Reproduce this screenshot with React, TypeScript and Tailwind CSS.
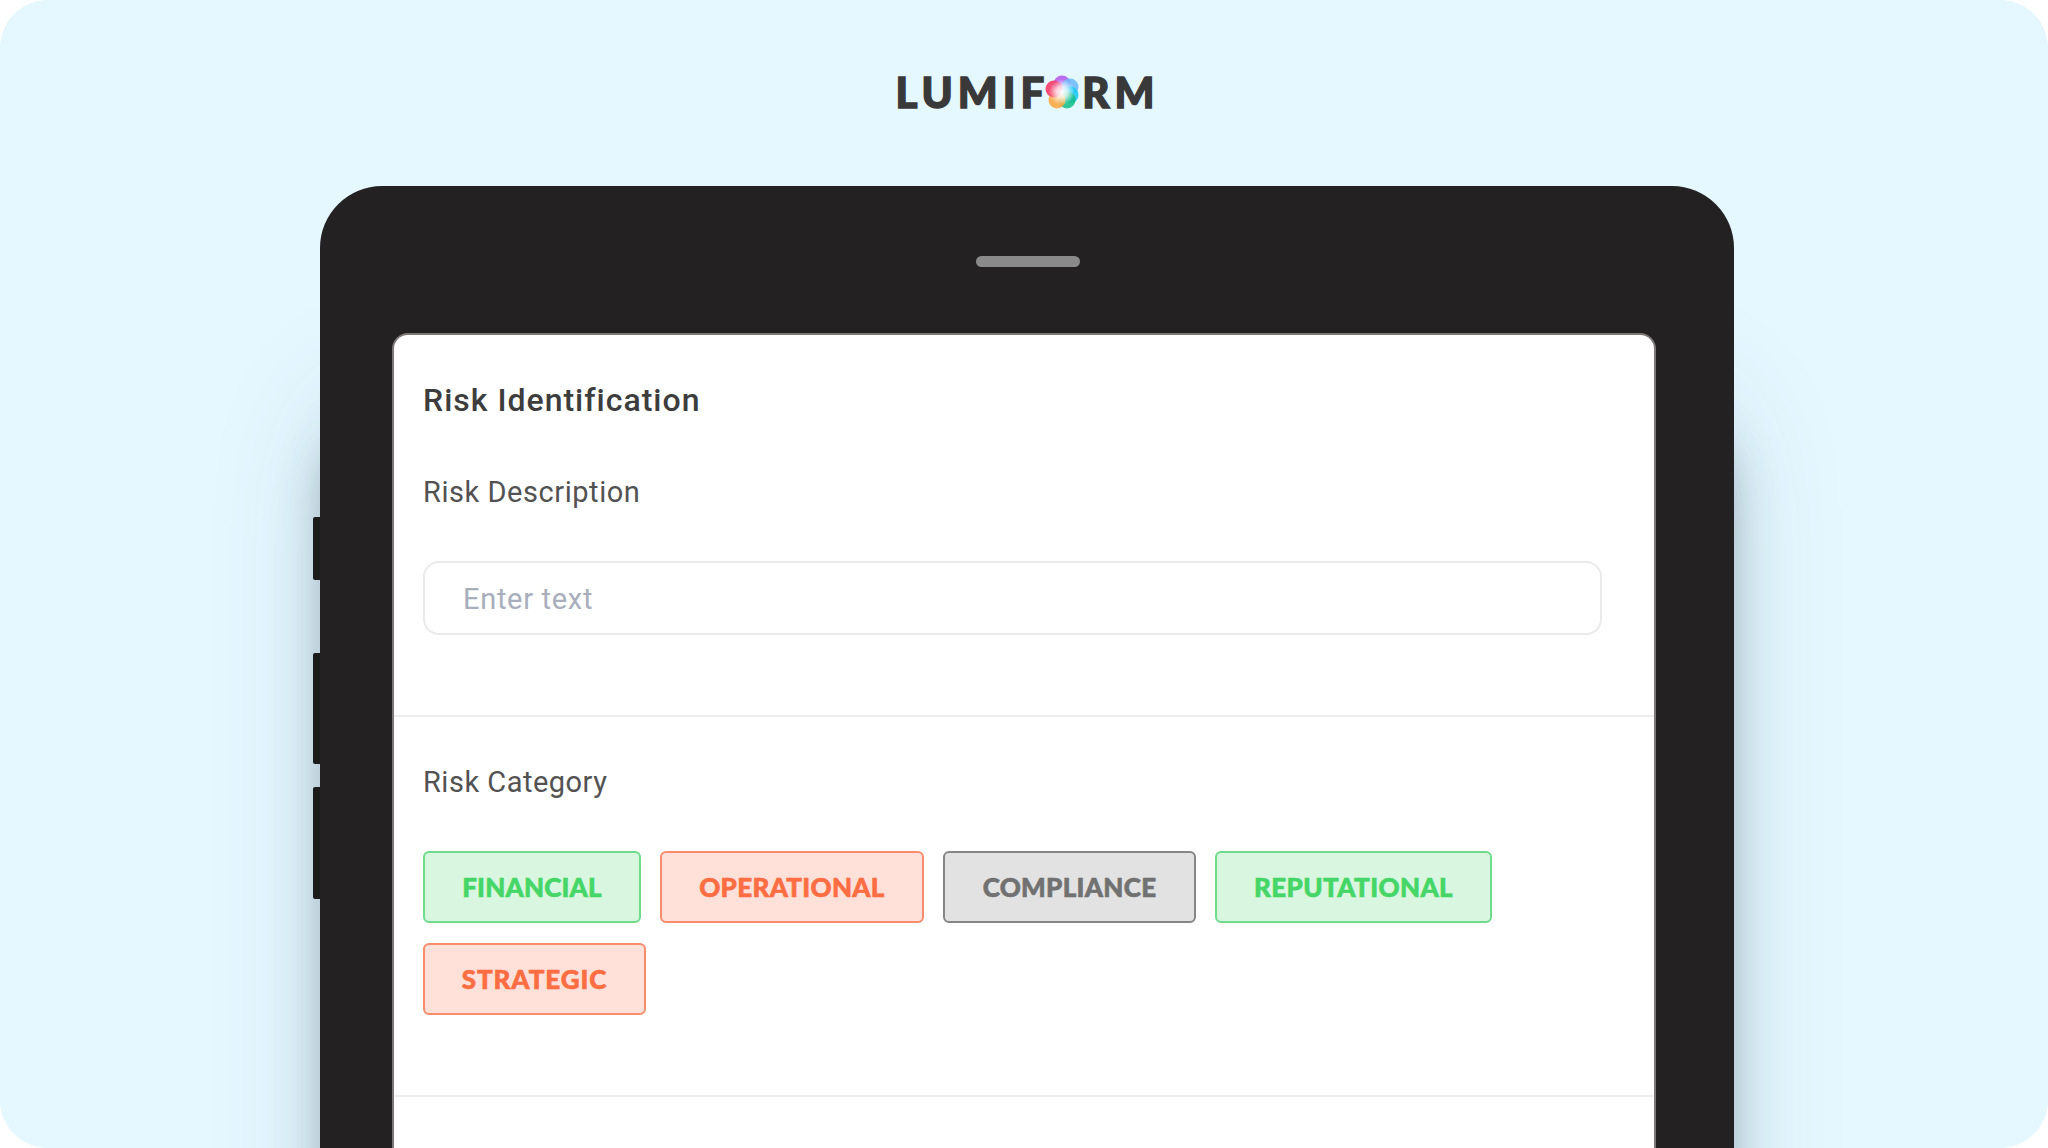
const chips = [
  [
    { label: 'FINANCIAL', width: 'w-[218px]', tone: 'border-[#6fdc8c] bg-[#d9f7e0] text-[#46d667] tracking-[0.2px]' },
    { label: 'OPERATIONAL', width: 'w-[264px]', tone: 'border-[#f98c6c] bg-[#ffe1d9] text-[#ff6d42] tracking-[0.3px]' },
    { label: 'COMPLIANCE', width: 'w-[253px]', tone: 'border-[#868686] bg-[#e2e2e2] text-[#717171] tracking-[0.3px]' },
    { label: 'REPUTATIONAL', width: 'w-[277px]', tone: 'border-[#6fdc8c] bg-[#d9f7e0] text-[#46d667] tracking-[0.4px]' },
  ],
  [{ label: 'STRATEGIC', width: 'w-[223px]', tone: 'border-[#f98c6c] bg-[#ffe1d9] text-[#ff6d42] tracking-[0.9px]' }],
];

function LogoMark() {
  return (
    <svg width="34" height="34" viewBox="0 0 34 34" className="-ml-[4px] mr-[3px]">
      <defs>
        <radialGradient id="glow" cx="50%" cy="50%" r="50%">
          <stop offset="0%" stopColor="#ffffff" stopOpacity="1" />
          <stop offset="45%" stopColor="#ffffff" stopOpacity="0.75" />
          <stop offset="100%" stopColor="#ffffff" stopOpacity="0" />
        </radialGradient>
      </defs>
      <g fillOpacity="0.85">
        <circle cx="17" cy="9" r="8.5" fill="#b455ea" />
        <circle cx="25" cy="12" r="8.5" fill="#6ab8fb" />
        <circle cx="25" cy="20" r="8.5" fill="#12c9ee" />
        <circle cx="22" cy="25" r="8.5" fill="#12bd84" />
        <circle cx="12" cy="25" r="8.5" fill="#fca53a" />
        <circle cx="9" cy="14" r="8.5" fill="#f8305f" />
      </g>
      <circle cx="17" cy="17" r="13" fill="url(#glow)" />
    </svg>
  );
}

export default function App() {
  return (
    <div className="w-[2048px] h-[1148px] bg-white overflow-hidden">
      <div className="h-full rounded-[48px] bg-[#e5f7ff] overflow-hidden font-['Roboto',sans-serif]">
        {/* Logo */}
        <div className="h-[186px] pt-[72px] pl-[7px] flex justify-center">
          <div className="h-[40px] flex items-center font-['Lato',sans-serif] font-black text-[42px] leading-none text-[#393939] tracking-[5px] [-webkit-text-stroke:1.4px_#393939]">
            <span>LUMIF</span>
            <LogoMark />
            <span>RM</span>
          </div>
        </div>

        {/* Tablet */}
        <div className="relative ml-[320px] w-[1414px] h-[1100px] rounded-[62px] bg-[#232121] pt-[147px] pl-[72px] shadow-[0_240px_50px_-8px_rgba(40,65,80,0.42),0_200px_130px_-10px_rgba(60,85,100,0.14)]">
          <div className="absolute left-[656px] top-[70px] w-[104px] h-[11px] rounded-full bg-[#8a8a8a]" />
          <div className="absolute -left-[7px] top-[331px] w-[7px] h-[63px] rounded-l-[2px] bg-[#1c1b1b]" />
          <div className="absolute -left-[7px] top-[467px] w-[7px] h-[111px] rounded-l-[2px] bg-[#1c1b1b]" />
          <div className="absolute -left-[7px] top-[601px] w-[7px] h-[112px] rounded-l-[2px] bg-[#1c1b1b]" />

          <div className="w-[1264px] h-[900px] rounded-t-[16px] border-2 border-b-0 border-[#7d7878] bg-white text-[#525252]">
            <section className="h-[382px] px-[29px] pt-[45px] border-b-2 border-[#eeeeee]">
              <h2 className="text-[32px] leading-[40px] font-medium tracking-[1px] text-[#3d3d3d]">Risk Identification</h2>
              <p className="mt-[52px] text-[29px] leading-[40px] tracking-[0.55px]">Risk Description</p>
              <div className="mt-[49px] w-[1179px] h-[74px] rounded-[16px] border-2 border-[#eaeaea] px-[38px] pt-[3px] flex items-center text-[29px] tracking-[0.7px] text-[#a8aebb]">
                Enter text
              </div>
            </section>

            <section className="h-[380px] px-[29px] pt-[45px] border-b-2 border-[#eeeeee]">
              <p className="text-[29px] leading-[40px] tracking-[0.5px]">Risk Category</p>
              <div className="mt-[49px] flex flex-col gap-[20px]">
                {chips.map((row, i) => (
                  <div key={i} className="flex gap-[19px]">
                    {row.map((chip) => (
                      <div
                        key={chip.label}
                        className={`h-[72px] rounded-[6px] border-2 flex items-center justify-center font-['Lato',sans-serif] font-black text-[26px] [-webkit-text-stroke:0.6px_currentColor] ${chip.width} ${chip.tone}`}
                      >
                        {chip.label}
                      </div>
                    ))}
                  </div>
                ))}
              </div>
            </section>
          </div>
        </div>
      </div>
    </div>
  );
}
